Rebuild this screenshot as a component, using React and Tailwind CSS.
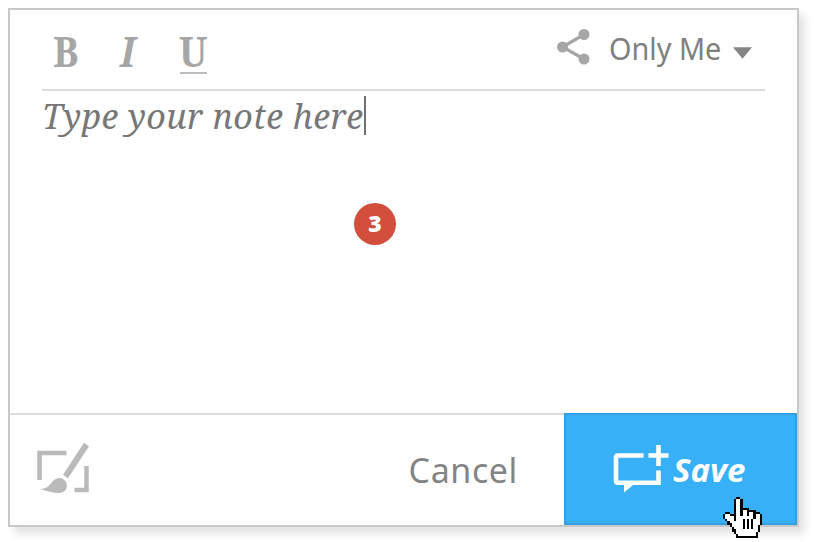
import React from "react";

function Format({ children, className }) {
  return (
    <button className={"flex h-[42px] items-start border-b-2 text-left font-['Noto_Serif','DejaVu_Serif',serif] text-[41px] font-bold leading-[37px] text-[#a6a6a6] " + className}>
      {children}
    </button>
  );
}

// Pointer bitmap: B is outline, W is fill.
const HAND = [
  "......BB..........",
  ".....BWWB.........",
  ".....BWWB.........",
  ".....BWWB.........",
  ".....BWWB.........",
  ".....BWWBBBB......",
  ".....BWWBWWBBBB...",
  ".BB..BWWBWWBWWBBB.",
  "BWWBBBWWBWWBWWBWWB",
  "BWWWWBWWWWWWWWBWWB",
  ".BWWWBWWWBWBWBWWWB",
  "..BWWWWWWBWBWBWWWB",
  "..BBWWWWWBWBWBWWWB",
  "...BWWWWWBWBWBWWB.",
  "....BWWWWBWBWBWWB.",
  "....BBWWWWWWWWWWB.",
  ".....BWWWWWWWWWB..",
  "......BWWWWWWWWB..",
  "......BBBBBBBBBB..",
];

function Cursor() {
  return (
    <svg className="absolute left-[723px] top-[497px]" width="39" height="41" viewBox="0 0 18 19" preserveAspectRatio="none" shapeRendering="crispEdges">
      {HAND.map((row, y) =>
        [...row].map((c, x) =>
          c === "." ? null : <rect key={x + "-" + y} x={x} y={y} width="1" height="1" fill={c === "B" ? "#000" : "#fff"} />
        )
      )}
    </svg>
  );
}

export default function App() {
  return (
    <main className="relative h-[542px] w-[814px] overflow-hidden bg-white pl-2 pt-2 font-['Noto_Sans',sans-serif]">
      <section className="flex h-[519px] w-[791px] flex-col border-2 border-[#c8c8c8] bg-white shadow-[6px_7px_8px_rgba(0,0,0,0.11)]">
        <header className="mx-[32px] flex h-[81px] shrink-0 items-start justify-between border-b-2 border-[#dcdcdc]">
          <div className="flex pl-[11px] pt-[22px]">
            <Format className="w-[67px] border-transparent"><span className="mt-px origin-left scale-x-[0.93]">B</span></Format>
            <Format className="w-[60px] border-transparent italic"><span className="mt-px origin-left scale-x-[0.93]">I</span></Format>
            <Format className="w-[27px] border-[#bdbdbd]"><span className="-ml-px mt-px origin-left scale-x-[0.93]">U</span></Format>
          </div>
          <button className="flex items-start pr-[13px] pt-[18px] text-[#808080]">
            <svg width="34" height="38" viewBox="0 0 34 38" className="mr-[19px] text-[#a6a6a6]" fill="currentColor">
              <path d="M27 6.500 5.500 19 27 31" fill="none" stroke="currentColor" strokeWidth="3.2" />
              <circle cx="27" cy="6.500" r="5.500" /><circle cx="5.500" cy="19" r="5.500" /><circle cx="27" cy="31" r="5.500" />
            </svg>
            <span className="w-[111px] whitespace-nowrap text-left text-[31px] leading-[40px]"><span className="-ml-px inline-block origin-left scale-x-[0.93]">Only Me</span></span>
            <svg width="19" height="12" viewBox="0 0 20 12" className="ml-3 mt-[19px]"><path d="M0 0h20L10 12z" fill="#858585" /></svg>
          </button>
        </header>
        <div className="relative flex flex-1 items-start px-[32px] pt-[5px]">
          <span className="w-[322px] whitespace-nowrap font-['Noto_Serif','DejaVu_Serif',serif] text-[34px] italic leading-[41px] tracking-[0.4px] text-[#777]">Type your note here</span>
          <span className="h-[39px] w-[2px] bg-[#707070]" />
          <span className="absolute left-[344px] top-[112px] flex size-[42px] items-center justify-center rounded-full bg-[#d24f3b] font-['Open_Sans',sans-serif] text-[23px] font-extrabold text-white"><span className="-mt-[2px]">3</span></span>
        </div>
        <footer className="flex h-[112px] shrink-0 border-t-2 border-[#dcdcdc]">
          <div className="flex flex-1 items-start pl-[26px] pt-[26px]">
            <svg width="56" height="54" viewBox="0 0 56 54" fill="none" stroke="#bababa" strokeWidth="4.5">
              <path d="M3.500 39V12h27M50.500 25v24H38.500" />
              <path d="m29.500 35.500 21-32" strokeWidth="6" />
              <path d="M4 48c8 0 10-5 13-8 4-4 10-4 13 1 3 7-2 11-7 11-6 0-12-2-19-4z" fill="#bababa" stroke="none" />
            </svg>
            <button className="ml-auto mr-[46px] pt-[6px] text-[34px] leading-[46px] tracking-[0.6px] text-[#848484]">Cancel</button>
          </div>
          <button className="-mt-[2px] flex h-[112px] w-[233px] items-start border-2 border-[#329fe0] bg-[#38b0f8] pl-[47px] pt-[30px] text-white">
            <svg width="56" height="50" viewBox="0 0 56 50" fill="none" stroke="white" strokeWidth="4.6">
              <path d="M30.500 10.500H5Q3 10.500 3 12.500V35.500Q3 37.700 5 37.700H45.500V25.500" />
              <path d="M35.500 10.500h20M45.500 0v21" />
              <path d="M11 37v10.500l11-9z" fill="white" stroke="none" />
            </svg>
            <span className="ml-[4px] font-['Open_Sans',sans-serif] text-[33px] font-bold italic leading-[50px]">Save</span>
          </button>
        </footer>
      </section>
      <Cursor />
    </main>
  );
}
